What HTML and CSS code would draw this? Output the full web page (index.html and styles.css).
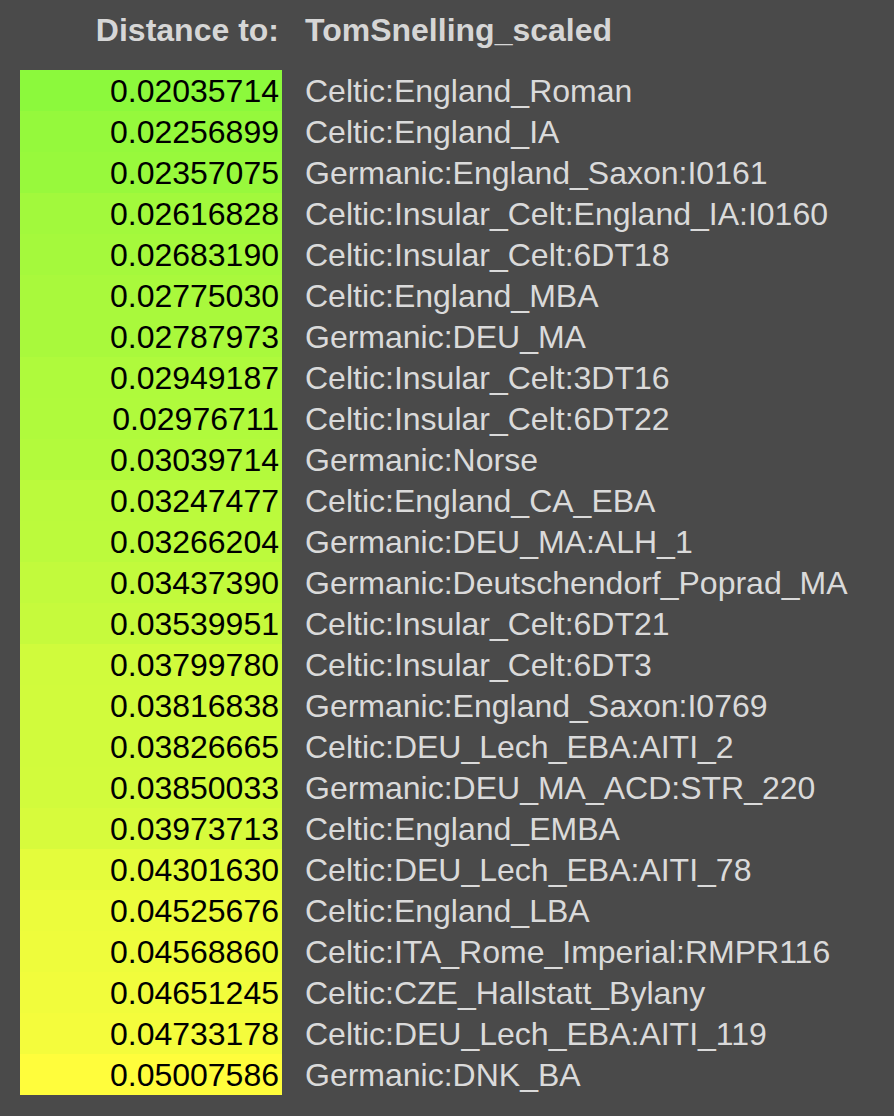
FILE: index.html
```html
<!DOCTYPE html>
<html>
<head>
<meta charset="utf-8">
<link rel="stylesheet" href="styles.css">
</head>
<body>
<div class="wrap">
  <div class="head">
    <div class="num-col">Distance to:</div>
    <div class="name-col">TomSnelling_scaled</div>
  </div>
  <div class="list">
    <div class="row"><div class="num" style="background:rgb(140,249,60)">0.02035714</div><div class="name">Celtic:England_Roman</div></div>
    <div class="row"><div class="num" style="background:rgb(149,249,60)">0.02256899</div><div class="name">Celtic:England_IA</div></div>
    <div class="row"><div class="num" style="background:rgb(152,249,60)">0.02357075</div><div class="name">Germanic:England_Saxon:I0161</div></div>
    <div class="row"><div class="num" style="background:rgb(162,249,60)">0.02616828</div><div class="name">Celtic:Insular_Celt:England_IA:I0160</div></div>
    <div class="row"><div class="num" style="background:rgb(165,249,60)">0.02683190</div><div class="name">Celtic:Insular_Celt:6DT18</div></div>
    <div class="row"><div class="num" style="background:rgb(169,249,60)">0.02775030</div><div class="name">Celtic:England_MBA</div></div>
    <div class="row"><div class="num" style="background:rgb(169,249,60)">0.02787973</div><div class="name">Germanic:DEU_MA</div></div>
    <div class="row"><div class="num" style="background:rgb(175,250,60)">0.02949187</div><div class="name">Celtic:Insular_Celt:3DT16</div></div>
    <div class="row"><div class="num" style="background:rgb(176,250,60)">0.02976711</div><div class="name">Celtic:Insular_Celt:6DT22</div></div>
    <div class="row"><div class="num" style="background:rgb(179,250,60)">0.03039714</div><div class="name">Germanic:Norse</div></div>
    <div class="row"><div class="num" style="background:rgb(187,250,60)">0.03247477</div><div class="name">Celtic:England_CA_EBA</div></div>
    <div class="row"><div class="num" style="background:rgb(188,250,60)">0.03266204</div><div class="name">Germanic:DEU_MA:ALH_1</div></div>
    <div class="row"><div class="num" style="background:rgb(194,250,60)">0.03437390</div><div class="name">Germanic:Deutschendorf_Poprad_MA</div></div>
    <div class="row"><div class="num" style="background:rgb(198,250,60)">0.03539951</div><div class="name">Celtic:Insular_Celt:6DT21</div></div>
    <div class="row"><div class="num" style="background:rgb(208,251,60)">0.03799780</div><div class="name">Celtic:Insular_Celt:6DT3</div></div>
    <div class="row"><div class="num" style="background:rgb(209,251,60)">0.03816838</div><div class="name">Germanic:England_Saxon:I0769</div></div>
    <div class="row"><div class="num" style="background:rgb(209,251,60)">0.03826665</div><div class="name">Celtic:DEU_Lech_EBA:AITI_2</div></div>
    <div class="row"><div class="num" style="background:rgb(210,251,60)">0.03850033</div><div class="name">Germanic:DEU_MA_ACD:STR_220</div></div>
    <div class="row"><div class="num" style="background:rgb(215,251,60)">0.03973713</div><div class="name">Celtic:England_EMBA</div></div>
    <div class="row"><div class="num" style="background:rgb(228,252,60)">0.04301630</div><div class="name">Celtic:DEU_Lech_EBA:AITI_78</div></div>
    <div class="row"><div class="num" style="background:rgb(236,252,60)">0.04525676</div><div class="name">Celtic:England_LBA</div></div>
    <div class="row"><div class="num" style="background:rgb(238,252,60)">0.04568860</div><div class="name">Celtic:ITA_Rome_Imperial:RMPR116</div></div>
    <div class="row"><div class="num" style="background:rgb(241,252,60)">0.04651245</div><div class="name">Celtic:CZE_Hallstatt_Bylany</div></div>
    <div class="row"><div class="num" style="background:rgb(244,252,60)">0.04733178</div><div class="name">Celtic:DEU_Lech_EBA:AITI_119</div></div>
    <div class="row"><div class="num" style="background:rgb(255,253,60)">0.05007586</div><div class="name">Germanic:DNK_BA</div></div>
  </div>
</div>
</body>
</html>
```

FILE: styles.css
```css
html, body {
  margin: 0;
  padding: 0;
  background: #4a4a4a;
}

body {
  font-family: "Liberation Sans", Arial, Helvetica, sans-serif;
  font-size: 32px;
  line-height: 41px;
  color: #dadada;
}

.wrap {
  padding: 10px 0 0 20px;
}

.head {
  display: flex;
  font-weight: bold;
  color: #d6d6d6;
  margin-bottom: 19px;
}

.num-col,
.num {
  width: 262px;
  box-sizing: border-box;
  padding-right: 3px;
  text-align: right;
  flex: none;
}

.name-col,
.name {
  padding-left: 23px;
  white-space: nowrap;
}

.list {
  display: flex;
  flex-direction: column;
}

.row {
  display: flex;
  height: 41px;
  line-height: 43px;
}

.num {
  color: #000;
  height: 41px;
}
```
